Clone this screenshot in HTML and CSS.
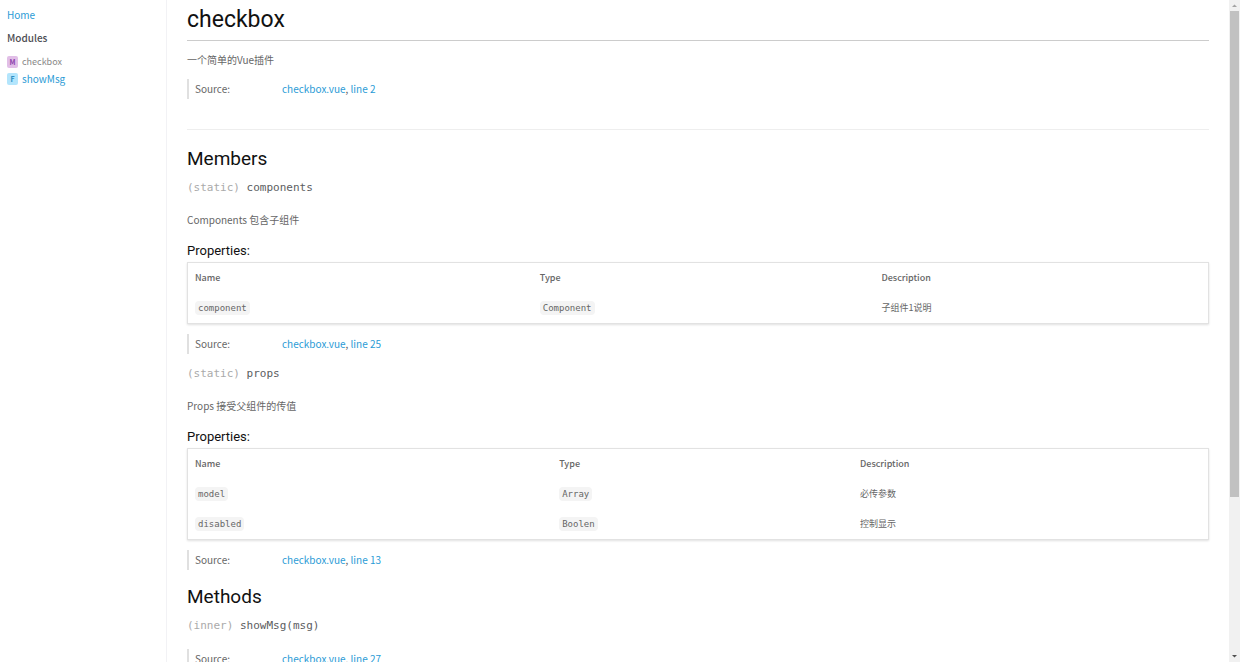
FILE: index.html
```
<!DOCTYPE html>
<html lang="zh-CN">
<head>
    <meta charset="UTF-8">
    <meta name="viewport" content="width=device-width, initial-scale=1.0">
    <title>checkbox - Documentation</title>
    <link rel="stylesheet" href="styles.css">
</head>
<body>
<div class="page">
    <!-- Sidebar -->
    <nav>
        <a class="home" href="#">Home</a>
        <h3>Modules</h3>
        <ul>
            <li class="nav-module"><span class="badge badge-m">M</span><a href="#checkbox">checkbox</a></li>
            <li class="nav-function"><span class="badge badge-f">F</span><a href="#showMsg">showMsg</a></li>
        </ul>
    </nav>

    <main>
        <h1 id="checkbox">checkbox</h1>

        <section class="overview">
            <p>一个简单的Vue插件</p>
            <dl class="details">
                <dt>Source:</dt>
                <dd><a href="#">checkbox.vue</a>, <a href="#">line 2</a></dd>
            </dl>
        </section>

        <section>
            <h2>Members</h2>

            <h4 class="name"><span class="type-signature">(static)</span> components</h4>
            <p class="description">Components 包含子组件</p>
            <h5>Properties:</h5>
            <table>
                <colgroup>
                    <col class="components-name">
                    <col class="components-type">
                    <col>
                </colgroup>
                <thead>
                    <tr><th>Name</th><th>Type</th><th>Description</th></tr>
                </thead>
                <tbody>
                    <tr><td><code>component</code></td><td><code>Component</code></td><td>子组件1说明</td></tr>
                </tbody>
            </table>
            <dl class="details">
                <dt>Source:</dt>
                <dd><a href="#">checkbox.vue</a>, <a href="#">line 25</a></dd>
            </dl>

            <h4 class="name"><span class="type-signature">(static)</span> props</h4>
            <p class="description">Props 接受父组件的传值</p>
            <h5>Properties:</h5>
            <table>
                <colgroup>
                    <col class="props-name">
                    <col class="props-type">
                    <col>
                </colgroup>
                <thead>
                    <tr><th>Name</th><th>Type</th><th>Description</th></tr>
                </thead>
                <tbody>
                    <tr><td><code>model</code></td><td><code>Array</code></td><td>必传参数</td></tr>
                    <tr><td><code>disabled</code></td><td><code>Boolen</code></td><td>控制显示</td></tr>
                </tbody>
            </table>
            <dl class="details">
                <dt>Source:</dt>
                <dd><a href="#">checkbox.vue</a>, <a href="#">line 13</a></dd>
            </dl>
        </section>

        <section>
            <h2>Methods</h2>
            <h4 class="name" id="showMsg"><span class="type-signature">(inner)</span> showMsg(msg)</h4>
            <dl class="details">
                <dt>Source:</dt>
                <dd><a href="#">checkbox.vue</a>, <a href="#">line 27</a></dd>
            </dl>
        </section>
    </main>

    <div class="scrollbar" aria-hidden="true">
        <svg viewBox="0 0 11 11"><path d="M3 7L5.5 4.5L8 7Z" fill="#a3a3a3"/></svg>
        <div class="track"><div class="thumb"></div></div>
        <svg viewBox="0 0 11 11"><path d="M3 4L5.5 6.5L8 4Z" fill="#505050"/></svg>
    </div>
</div>
</body>
</html>
```
FILE: styles.css
```
/* General Styles */
* {
    box-sizing: border-box;
}

body {
    margin: 0;
    background: #fff;
    color: #666;
    font-family: "Noto Sans CJK SC", sans-serif;
    font-size: 10px;
    line-height: 20px;
}

a {
    color: #2a9bd6;
    text-decoration: none;
}

.page {
    display: flex;
    height: 100vh;
    overflow: hidden;
}

/* Sidebar */
nav {
    flex: 0 0 167px;
    padding: 5px 7px;
    border-right: 1px solid #f2f2f5;
}

.home {
    display: block;
}

nav h3 {
    margin: 3px 0 5px;
    color: #4d4e53;
    font-size: 10px;
    font-weight: 500;
    line-height: 20px;
}

nav ul {
    margin: 0;
    padding: 0;
    list-style: none;
}

nav li {
    display: flex;
    align-items: center;
    gap: 4px;
    height: 17px;
}

.nav-module a {
    color: #888;
    font-size: 9px;
}

.badge {
    width: 11px;
    height: 12px;
    border-radius: 2px;
    font-size: 7px;
    font-weight: 700;
    line-height: 12px;
    text-align: center;
}

.badge-m {
    background: #e1bee7;
    color: #8e44ad;
}

.badge-f {
    background: #b3e5fc;
    color: #2f8fc4;
}

/* Content */
main {
    flex: 1;
    min-width: 0;
    padding: 0 20px;
    overflow: hidden;
}

h1, h2, h5 {
    color: #111;
    font-family: Roboto, sans-serif;
    font-weight: 400;
}

h1 {
    margin: 0 0 9px;
    border-bottom: 1px solid #ccc;
    font-size: 23px;
    line-height: 40px;
}

h2 {
    margin: 0;
    padding-top: 6px;
    font-size: 19px;
    line-height: 30px;
}

h5 {
    margin: 11px 0 1px;
    font-size: 13px;
    line-height: 20px;
}

p {
    margin: 0;
}

.overview {
    margin-bottom: 8px;
    padding-bottom: 24px;
    border-bottom: 1px solid #eee;
}

.name {
    margin: 0;
    color: #5c5d61;
    font-family: "DejaVu Sans Mono", monospace;
    font-size: 11px;
    font-weight: 400;
    line-height: 28px;
}

.type-signature {
    color: #aaa;
}

.description {
    margin-top: 8px;
}

.details {
    display: flex;
    margin: 9px 0 6px;
    padding-left: 6px;
    border-left: 2px solid #e0e0e0;
}

.details dt {
    width: 87px;
}

.details dd {
    margin: 0;
}

table {
    width: 100%;
    margin-bottom: 10px;
    border: 1px solid #e2e2e2;
    border-collapse: separate;
    border-spacing: 0;
    box-shadow: 0 1px 2px rgba(0, 0, 0, 0.12);
    font-size: 9px;
    table-layout: fixed;
}

th, td {
    height: 30px;
    padding: 0 7px;
    text-align: left;
}

th {
    font-weight: 500;
}

.components-name {
    width: 33.8%;
}

.components-type {
    width: 33.5%;
}

.props-name {
    width: 35.7%;
}

.props-type {
    width: 29.5%;
}

code {
    padding: 2px 3px;
    border-radius: 4px;
    background: #f4f4f4;
    font-family: "DejaVu Sans Mono", monospace;
    font-size: 9px;
}

/* Scrollbar */
.scrollbar {
    display: flex;
    flex: 0 0 11px;
    flex-direction: column;
    background: #f1f1f1;
}

.scrollbar svg {
    width: 11px;
    height: 11px;
}

.track {
    flex: 1;
    padding: 0 1px;
}

.thumb {
    height: 76%;
    background: #c1c1c1;
}
```
